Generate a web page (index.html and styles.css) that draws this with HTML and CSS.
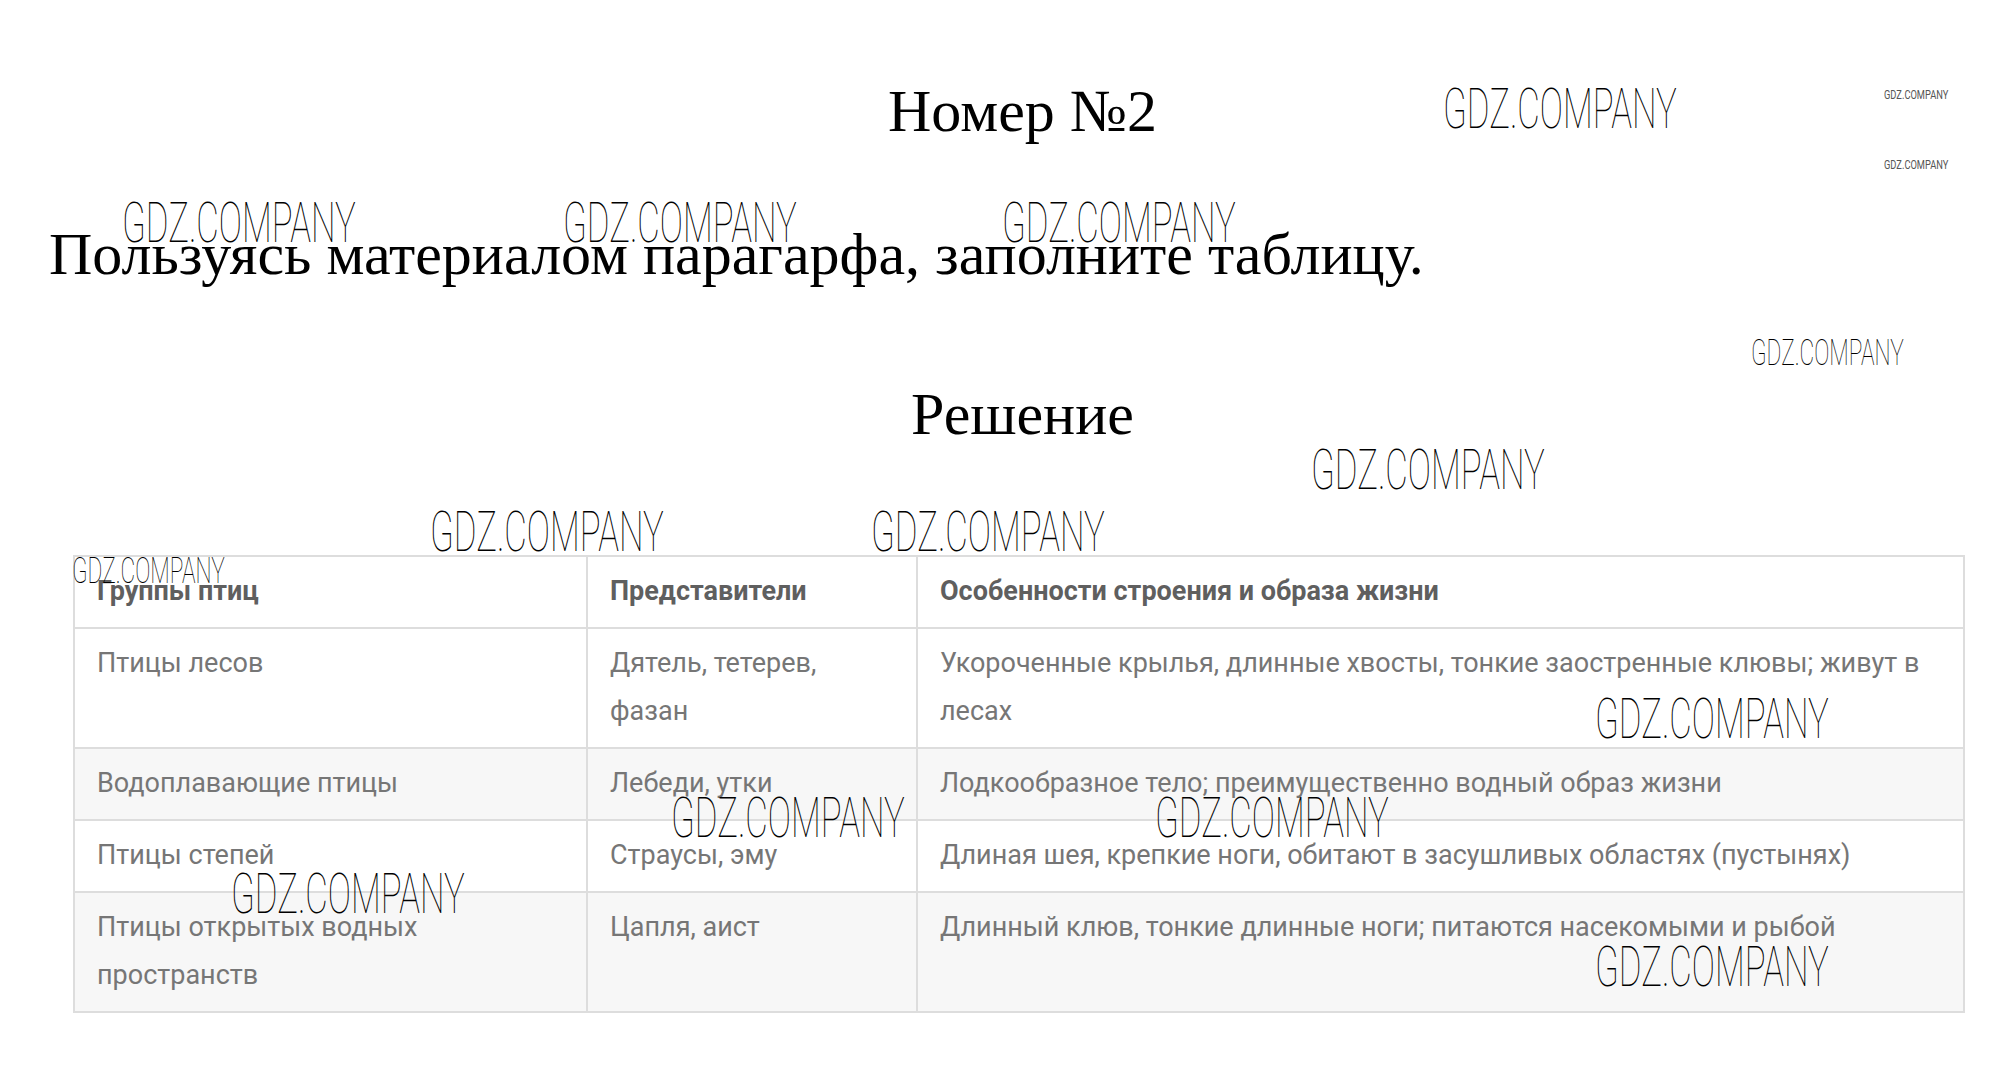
FILE: index.html
```html
<!DOCTYPE html>
<html lang="ru">
<head>
<meta charset="utf-8">
<title>Номер №2</title>
<link rel="stylesheet" href="styles.css">
</head>
<body>
<div class="page">
  <h1 class="title">Номер №2</h1>
  <p class="task">Пользуясь материалом парагарфа, заполните таблицу.</p>
  <h2 class="title">Решение</h2>
  <table class="birds">
    <thead>
      <tr><th class="c1">Группы птиц</th><th class="c2">Представители</th><th class="c3">Особенности строения и образа жизни</th></tr>
    </thead>
    <tbody>
      <tr><td>Птицы лесов</td><td>Дятель, тетерев,<br>фазан</td><td>Укороченные крылья, длинные хвосты, тонкие заостренные клювы; живут в лесах</td></tr>
      <tr class="alt"><td>Водоплавающие птицы</td><td>Лебеди, утки</td><td>Лодкообразное тело; преимущественно водный образ жизни</td></tr>
      <tr><td>Птицы степей</td><td>Страусы, эму</td><td>Длиная шея, крепкие ноги, обитают в засушливых областях (пустынях)</td></tr>
      <tr class="alt"><td>Птицы открытых водных пространств</td><td>Цапля, аист</td><td>Длинный клюв, тонкие длинные ноги; питаются насекомыми и рыбой</td></tr>
    </tbody>
  </table>
</div>
<div class="wm-layer" aria-hidden="true">
  <span class="wm big w1">GDZ.COMPANY</span>
  <span class="wm tiny t1">GDZ.COMPANY</span>
  <span class="wm tiny t2">GDZ.COMPANY</span>
  <span class="wm big w2">GDZ.COMPANY</span>
  <span class="wm big w3">GDZ.COMPANY</span>
  <span class="wm big w4">GDZ.COMPANY</span>
  <span class="wm mid w5">GDZ.COMPANY</span>
  <span class="wm big w6">GDZ.COMPANY</span>
  <span class="wm big w7">GDZ.COMPANY</span>
  <span class="wm big w8">GDZ.COMPANY</span>
  <span class="wm mid w9">GDZ.COMPANY</span>
  <span class="wm big w10">GDZ.COMPANY</span>
  <span class="wm big w11">GDZ.COMPANY</span>
  <span class="wm big w12">GDZ.COMPANY</span>
  <span class="wm big w13">GDZ.COMPANY</span>
  <span class="wm big w14">GDZ.COMPANY</span>
</div>
</body>
</html>
```
FILE: styles.css
```css
html, body {
  margin: 0;
  padding: 0;
  background: #ffffff;
}
body {
  position: relative;
  width: 2015px;
  height: 1068px;
  overflow: hidden;
  font-family: "Liberation Serif", "Times New Roman", serif;
  color: #000;
}
.page {
  padding: 75px 0 0 30px;
}
.title {
  margin: 0;
  font-size: 60px;
  line-height: 72px;
  font-weight: normal;
  text-align: center;
}
h2.title {
  margin-top: 88px;
}
.task {
  margin: 71px 0 0 19px;
  font-size: 60px;
  line-height: 72px;
}
.birds {
  margin: 105px 0 0 43px;
  width: 1892px;
  border-collapse: collapse;
  table-layout: fixed;
  font-family: "Roboto", "Liberation Sans", sans-serif;
  font-size: 27px;
  line-height: 48px;
  color: #767676;
}
.birds th, .birds td {
  border: 2px solid #dddddd;
  padding: 10px 22px 12px;
  text-align: left;
  vertical-align: top;
}
.birds th {
  font-weight: 700;
  color: #5f5f5f;
}
.birds .c1 { width: 467px; }
.birds .c2 { width: 284px; }
.birds .alt td { background: #f7f7f7; }

.wm-layer {
  position: absolute;
  left: 0;
  top: 0;
  width: 2015px;
  height: 1068px;
  pointer-events: none;
}
.wm {
  position: absolute;
  font-family: "Roboto", "Liberation Sans", sans-serif;
  line-height: 1;
  white-space: nowrap;
  transform-origin: 0 0;
  color: #000;
}
.wm.big {
  font-size: 56px;
  font-weight: 100;
  transform: scaleX(0.62);
}
.wm.mid {
  font-size: 36px;
  font-weight: 100;
  transform: scaleX(0.63);
}
.wm.tiny {
  font-size: 13.5px;
  font-weight: 400;
  color: #555;
  transform: scaleX(0.69);
}
.w1 { left: 1443px; top: 81px; }
.t1 { left: 1884px; top: 88px; }
.t2 { left: 1884px; top: 158px; }
.w2 { left: 122px; top: 195px; }
.w3 { left: 563px; top: 195px; }
.w4 { left: 1002px; top: 195px; }
.w5 { left: 1751px; top: 335px; }
.w6 { left: 1311px; top: 442px; }
.w7 { left: 430px; top: 504px; }
.w8 { left: 871px; top: 504px; }
.w9 { left: 72px; top: 553px; }
.w10 { left: 1595px; top: 691px; }
.w11 { left: 671px; top: 790px; }
.w12 { left: 1155px; top: 790px; }
.w13 { left: 231px; top: 866px; }
.w14 { left: 1595px; top: 939px; }
```
